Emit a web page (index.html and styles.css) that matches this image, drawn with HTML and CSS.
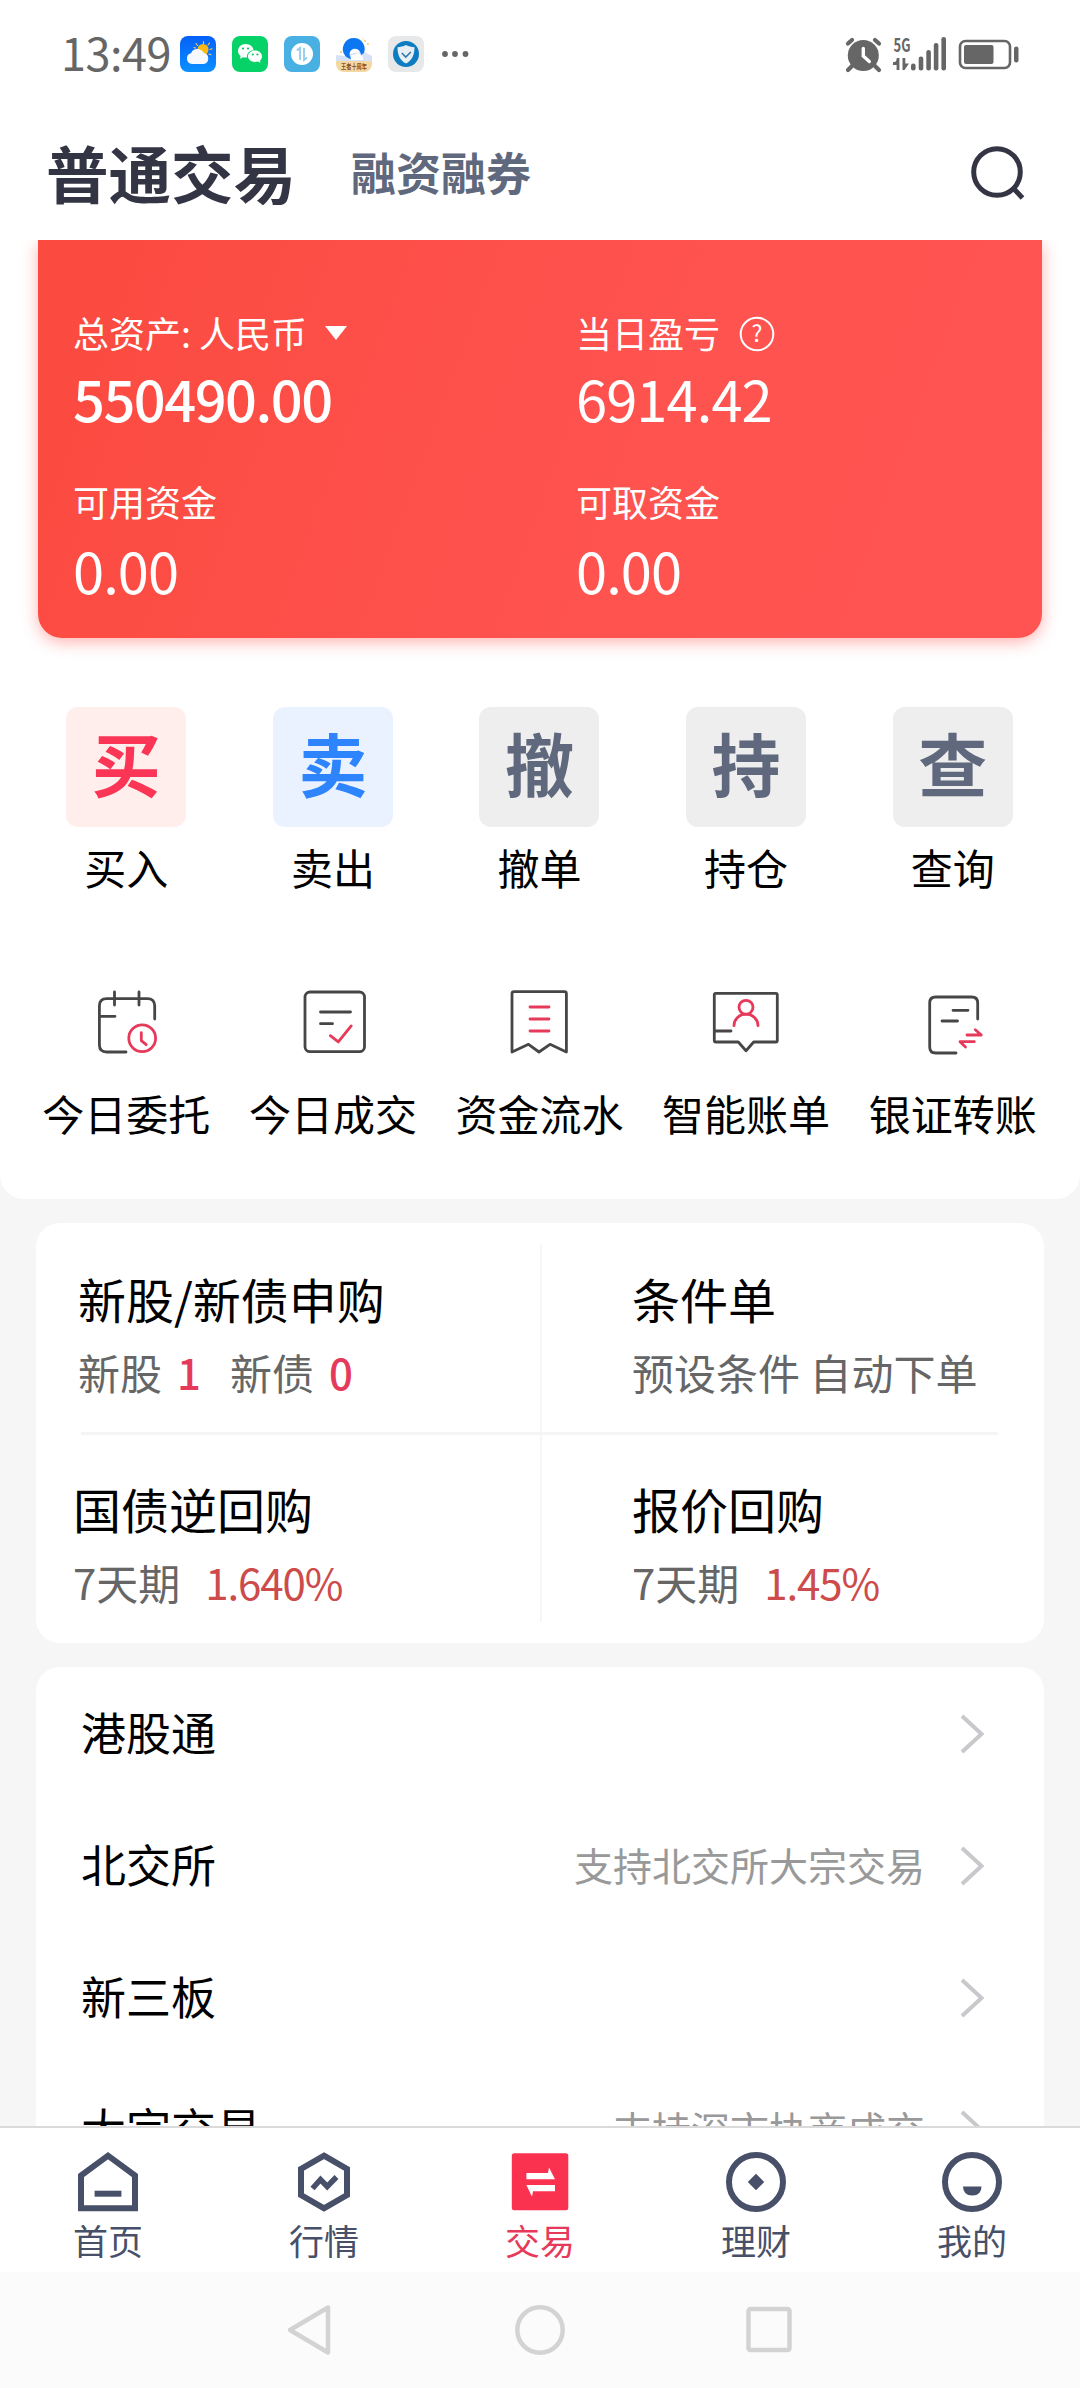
FILE: index.html
```html
<!DOCTYPE html>
<html lang="zh-CN">
<head>
<meta charset="utf-8">
<title>普通交易</title>
<link rel="stylesheet" href="styles.css">
</head>
<body>
<div class="status">
  <span class="time">13:49</span>
  <div class="apps">
    <svg width="36" height="36" viewBox="0 0 36 36">
      <defs><linearGradient id="sky" x1="0" y1="0" x2="0" y2="1"><stop offset="0" stop-color="#0560f8"/><stop offset="1" stop-color="#0a90ff"/></linearGradient></defs>
      <rect width="36" height="36" rx="8" fill="url(#sky)"/>
      <g stroke="#ffc65a" stroke-width="1.1" stroke-linecap="round"><path d="M23.5 8V5.5M17.5 9.500l-1.500-2M28 9l1.500-2M30 13.500l2-.8M15.500 12l-1.500-.5M29 18l2 .8"/></g>
      <circle cx="23" cy="13.500" r="5.500" fill="#fdb913"/>
      <path d="M12 28a5.500 5.500 0 0 1-1-10.800 7 7 0 0 1 12.500-.5A5.800 5.800 0 0 1 24 28z" fill="#f6faff"/>
    </svg>
    <svg width="36" height="36" viewBox="0 0 36 36">
      <rect width="36" height="36" rx="8" fill="#06d267"/>
      <path d="M13.500 8c4.500 0 7.800 2.800 8 6.300-4 .2-6.800 3-6.500 7.200-1.500.2-2.800 0-4-.3l-3 1.500.6-2.600C7 18.800 6 17 6 15c0-4 3.300-7 7.500-7z" fill="#fff"/>
      <path d="M23 14.500c4 0 7 2.600 7 5.800 0 1.700-.8 3.200-2 4.300l.5 2.200-2.700-1.300c-.9.300-1.800.4-2.800.4-4 0-7-2.500-7-5.600s3-5.800 7-5.800z" fill="#fff"/>
      <g fill="#06c160"><circle cx="11" cy="12.500" r="1.100"/><circle cx="16" cy="12.500" r="1.100"/><circle cx="20.800" cy="18.500" r="1"/><circle cx="25.400" cy="18.500" r="1"/></g>
    </svg>
    <svg width="36" height="36" viewBox="0 0 36 36">
      <rect width="36" height="36" rx="8" fill="#48b0e2"/><circle cx="18" cy="18" r="11" fill="#fff"/>
      <path d="M13 14.500l3-2.500v12M20 12v12l3-2.500" fill="none" stroke="#8fcdee" stroke-width="1.800"/>
    </svg>
    <svg width="36" height="36" viewBox="0 0 36 36">
      <path d="M0 19l8 1 10-3 10-1 8 4v8H0z" fill="#d5e2f8"/>
      <path d="M18 2a11 11 0 0 0-9 17.500c2 2.500 5 4 8 3.500-4-1-5-8 0-10 5-1.500 8 3 8 6l3-2A11 11 0 0 0 18 2z" fill="#0b78f2"/>
      <path d="M15 23c-1-4 2-5 4-4 1-3 6-2 6 1 3 0 3 4 1 4H15z" fill="#fff"/>
      <g fill="#f6c45b"><circle cx="29" cy="5" r=".9"/><circle cx="32" cy="8" r=".9"/><circle cx="5" cy="16" r=".9"/><circle cx="27" cy="3" r=".6"/></g>
      <path d="M0 25h36v3a8 8 0 0 1-8 8H8a8 8 0 0 1-8-8z" fill="#f3d9a1"/>
      <text class="badge-text" x="18" y="32.500" text-anchor="middle" textLength="26" lengthAdjust="spacingAndGlyphs">王者十周年</text>
    </svg>
    <svg width="36" height="36" viewBox="0 0 36 36">
      <rect width="36" height="36" rx="8" fill="#e6e8ea"/><circle cx="18" cy="18" r="13" fill="#0d7cc0"/>
      <path d="M18 9c2.800 1.500 5.500 2 8.500 2.200 0 7-2 13-8.500 16.300-6.500-3.300-8.500-9.300-8.500-16.300C12.500 11 15.200 10.500 18 9z" fill="#e9eef2"/>
      <path d="M13.800 17l4 4 5-5" fill="none" stroke="#2b7aad" stroke-width="1.600"/>
    </svg>
    <svg class="dots" width="28" height="36" viewBox="0 0 28 36"><g fill="#666"><circle cx="4" cy="18" r="2.900"/><circle cx="14" cy="18" r="2.900"/><circle cx="24.500" cy="18" r="2.900"/></g></svg>
  </div>
  <svg class="sysicons" width="180" height="60" viewBox="844 24 180 60">
    <g fill="#666">
      <circle cx="864.300" cy="55.500" r="15.500"/>
      <path d="M853 66l-4 4M876 66l4 4M849 43.500l4-3.500M880 43.500l-4-3.500" stroke="#666" stroke-width="4.200" stroke-linecap="round"/>
      <path d="M864.300 48.500v7.500l6 5.500" fill="none" stroke="#fff" stroke-width="3.400" stroke-linecap="round"/>
      <path d="M894 63.500h4.500M899 58v12" fill="none" stroke="#666" stroke-width="2.800"/><path d="M893.500 65l6-7v7zM903.500 58h2.800v5.500h3.700l-4.500 6.500h-2z"/>
      <rect x="912" y="63.500" width="4.600" height="7" rx="2.200"/><rect x="919.700" y="56.500" width="4.600" height="14" rx="2.200"/><rect x="927.300" y="50" width="4.600" height="20.500" rx="2.200"/><rect x="934.800" y="43" width="4.600" height="27.500" rx="2.200"/><rect x="942.400" y="37" width="4.600" height="33.500" rx="2.200"/>
      <rect x="965" y="45" width="29.500" height="19" rx="2"/><rect x="1015" y="46.500" width="4.500" height="16" rx="2.200"/>
    </g>
    <rect x="961" y="41" width="50" height="27" rx="5.500" fill="none" stroke="#666" stroke-width="2.600"/>
    <text class="net" x="894.500" y="51.500" textLength="17" lengthAdjust="spacingAndGlyphs">5G</text>
  </svg>
</div>

<header class="header">
  <h1>普通交易</h1>
  <span class="alt">融资融券</span>
  <svg class="search" width="60" height="60" viewBox="0 0 60 60"><circle cx="30" cy="30" r="23.300"/><path d="M47.500 47.500l8 8.500"/></svg>
</header>

<main class="content">
  <section class="top">
    <div class="assets">
      <div class="asset"><div class="label">总资产: 人民币<svg class="caret" width="22" height="14" viewBox="0 0 22 14"><path d="M0 0h22L11 14z" fill="#fff"/></svg></div><div class="num strong">550490.00</div></div>
      <div class="asset"><div class="label">当日盈亏<svg class="help" width="36" height="36" viewBox="0 0 36 36"><circle cx="18" cy="18" r="16.300" fill="none" stroke="#fff" stroke-width="2"/><text x="18" y="26" text-anchor="middle">?</text></svg></div><div class="num">6914.42</div></div>
      <div class="asset low"><div class="label">可用资金</div><div class="num">0.00</div></div>
      <div class="asset low"><div class="label">可取资金</div><div class="num">0.00</div></div>
    </div>

    <div class="actions">
      <div class="action"><span class="tile buy">买</span><span class="name">买入</span></div>
      <div class="action"><span class="tile sell">卖</span><span class="name">卖出</span></div>
      <div class="action"><span class="tile">撤</span><span class="name">撤单</span></div>
      <div class="action"><span class="tile">持</span><span class="name">持仓</span></div>
      <div class="action"><span class="tile">查</span><span class="name">查询</span></div>
    </div>

    <div class="actions tools">
      <div class="action">
        <svg class="line" width="80" height="80" viewBox="0 0 80 80"><path d="M68.700 37V24q0-7.300-7.300-7.300H20.700q-7.300 0-7.300 7.300v39q0 7 7.300 7H40M28.500 10v13M53 10v13M13.400 34.300H29"/><g class="red"><circle cx="56.200" cy="56.300" r="13.400"/><path d="M55.300 50.700v8l4.900 4"/></g></svg>
        <span class="name">今日委托</span></div>
      <div class="action">
        <svg class="line" width="80" height="80" viewBox="0 0 80 80"><rect x="12" y="10" width="59.500" height="59.700" rx="5"/><path d="M27.500 30h30M27.500 41.700h12"/><path class="red" d="M37.300 53.700l8 6.200 12.900-16"/></svg>
        <span class="name">今日成交</span></div>
      <div class="action">
        <svg class="line" width="80" height="80" viewBox="0 0 80 80"><path d="M13 70V11.700q0-2 2-2h50.400q2 0 2 2V70L51 62.300 40 70l-10.500-7.700z"/><path class="red" d="M31 25h19M31 37h19M31 49h19"/></svg>
        <span class="name">资金流水</span></div>
      <div class="action">
        <svg class="line" width="80" height="80" viewBox="0 0 80 80"><path d="M32.300 60H9.800q-1.500 0-1.500-1.500V12.800q0-1.500 1.500-1.500h60q1.500 0 1.500 1.500v45.700q0 1.500-1.500 1.500H47.700L40 68.700zM8.300 49h16.700"/><g class="red"><circle cx="40" cy="25.300" r="7"/><path d="M28 43.700a12 11.500 0 0 1 24 0"/></g></svg>
        <span class="name">智能账单</span></div>
      <div class="action">
        <svg class="line" width="80" height="80" viewBox="0 0 80 80"><path d="M64.700 37V21q0-6-6-6h-36q-6 0-6 6v44q0 6 6 6H43M40 28.300h15M29 39h15.500"/><path class="red" d="M54 53h14.300l-6-5.300M61.300 59.700H47l5.500 5.300"/></svg>
        <span class="name">银证转账</span></div>
    </div>
  </section>

  <section class="card products">
    <div class="row">
      <div class="cell"><div class="title">新股/新债申购</div><div class="sub">新股<b class="n1">1</b>新债<b class="n2">0</b></div></div>
      <div class="cell right"><div class="title">条件单</div><div class="sub">预设条件 自动下单</div></div>
    </div>
    <div class="rule"></div>
    <div class="row second">
      <div class="cell"><div class="title">国债逆回购</div><div class="sub">7天期<span class="rate">1.640%</span></div></div>
      <div class="cell right"><div class="title">报价回购</div><div class="sub">7天期<span class="rate">1.45%</span></div></div>
    </div>
  </section>

  <section class="card list">
    <div class="item"><span>港股通</span><svg width="26" height="42" viewBox="0 0 26 42"><path d="M3 3l19.500 18L3 39"/></svg></div>
    <div class="item"><span>北交所</span><span class="note">支持北交所大宗交易</span><svg width="26" height="42" viewBox="0 0 26 42"><path d="M3 3l19.500 18L3 39"/></svg></div>
    <div class="item"><span>新三板</span><svg width="26" height="42" viewBox="0 0 26 42"><path d="M3 3l19.500 18L3 39"/></svg></div>
    <div class="item"><span>大宗交易</span><span class="note">支持深市协商成交</span><svg width="26" height="42" viewBox="0 0 26 42"><path d="M3 3l19.500 18L3 39"/></svg></div>
  </section>
</main>

<nav class="tabs">
  <div class="tab"><svg width="64" height="64" viewBox="0 0 64 64"><path d="M5 58.300V25.500L32 5.700l27 19.800v32.800z"/><path d="M18.600 43.700h26.800"/></svg>首页</div>
  <div class="tab"><svg width="64" height="64" viewBox="0 0 64 64"><path d="M32 5.600L55 19v26L32 58.400 9 45V19z"/><path d="M20.500 38.500l8-9 6.700 7L44.500 27" stroke-width="5.500"/></svg>行情</div>
  <div class="tab active"><svg width="64" height="64" viewBox="0 0 64 64"><rect x="3.800" y="3.300" width="56.500" height="57" rx="2.500" fill="#fa3250" stroke="none"/><path d="M18.400 23H40l1-5.500L47 29.200H18.400zM47 35H18.400L24 46.700l1-5.400h22z" fill="#fff" stroke="none"/></svg>交易</div>
  <div class="tab"><svg width="64" height="64" viewBox="0 0 64 64"><circle cx="32" cy="32" r="27"/><path d="M32 23.700l8.200 8.300-8.200 8.300-8.200-8.300z" fill="#475068" stroke="none"/></svg>理财</div>
  <div class="tab"><svg width="64" height="64" viewBox="0 0 64 64"><circle cx="32" cy="32" r="27"/><path d="M23 36.500h18.500q0 9-9.200 9T23 36.500z" fill="#475068" stroke="none"/></svg>我的</div>
</nav>

<div class="sysnav">
  <svg width="54" height="54" viewBox="0 0 54 54"><path d="M45 4.500v45L7 27z"/></svg>
  <svg width="54" height="54" viewBox="0 0 54 54"><circle cx="27" cy="27" r="22.700"/></svg>
  <svg width="54" height="54" viewBox="0 0 54 54"><rect x="5.500" y="6" width="41" height="41" rx="2"/></svg>
</div>
</body>
</html>
```
FILE: styles.css
```css
* { box-sizing: border-box; }
body {
  margin: 0;
  width: 1080px;
  height: 2388px;
  overflow: hidden;
  display: flex;
  flex-direction: column;
  background: #f6f6f6;
  color: #000;
  font-family: "Noto Sans CJK SC", "Noto Sans", sans-serif;
}
svg { display: block; flex: none; }

.status {
  height: 108px;
  flex: none;
  background: #fff;
  display: flex;
  padding-left: 61px;
}
.time {
  width: 119px;
  padding-top: 18px;
  font-size: 45px;
  line-height: 68px;
  letter-spacing: -0.5px;
  color: #666;
}
.apps { display: flex; gap: 16px; padding-top: 36px; }
.dots { margin-left: 1px; }
.badge-text { font-size: 6.5px; font-weight: 700; fill: #8a4b1c; }
.sysicons { margin: 24px 57px 0 auto; }
.net { font-size: 19px; font-weight: 700; fill: #666; }

.header {
  height: 132px;
  flex: none;
  background: #fff;
  display: flex;
  align-items: center;
  padding: 0 53px 4px 46px;
}
.header h1 {
  margin: 0;
  width: 305px;
  font-size: 62.500px;
  line-height: 80px;
  font-weight: 700;
  color: #343544;
}
.alt { font-size: 45px; line-height: 60px; font-weight: 700; color: #5f687d; }
.search { margin-left: auto; fill: none; stroke: #343544; stroke-width: 5; }

.content { flex: 1; min-height: 0; overflow: hidden; }
.top { height: 959px; background: #fff; border-radius: 0 0 24px 24px; }
.assets {
  height: 398px;
  margin: 0 38px;
  padding: 67px 0 0 35px;
  display: grid;
  grid-template-columns: 503px 1fr;
  grid-template-rows: 169px 1fr;
  border-radius: 0 0 24px 24px;
  background: linear-gradient(110deg, #fb4a3f, #ff5350 60%, #ff5452);
  box-shadow: 0 4px 16px rgba(255, 84, 80, 0.45);
  color: #fff;
}
.label { display: flex; align-items: center; font-size: 36px; line-height: 50px; }
.caret { margin: 1px 0 0 18px; }
.help { margin: 3px 0 0 19px; }
.help text { font-size: 23px; fill: #fff; }
.num { margin-top: 7px; font-size: 56px; line-height: 68px; letter-spacing: -0.9px; }
.strong { font-weight: 500; letter-spacing: -1.5px; }
.low .num { margin-top: 10px; }

.actions {
  display: grid;
  grid-template-columns: repeat(5, 1fr);
  padding: 69px 24px 0 23px;
}
.action { display: flex; flex-direction: column; align-items: center; }
.tile {
  width: 120px;
  height: 120px;
  border-radius: 12px;
  background: #eee;
  color: #5f687d;
  font-size: 69px;
  font-weight: 700;
  line-height: 111px;
  text-align: center;
}
.buy { background: #ffeeec; color: #fa3556; }
.sell { background: #eaf2ff; color: #2d84fc; }
.name { margin-top: 14px; font-size: 42px; line-height: 52px; white-space: nowrap; }
.tools { padding-top: 89px; }
.tools .name { margin-top: 25px; }
.line { fill: none; stroke: #464646; stroke-width: 2.800; stroke-linecap: round; stroke-linejoin: round; }
.red { stroke: #e63a5a; }

.card { margin: 24px 36px 0; background: #fff; border-radius: 24px; }
.products { height: 420px; padding: 21px 0; }
.row { display: grid; grid-template-columns: 504px 1fr; height: 188px; }
.cell { padding: 24px 0 0 42px; }
.right { padding-left: 90px; border-left: 2px solid #f6f6f6; }
.second { height: 187px; }
.second .cell { padding-top: 43px; padding-left: 37px; }
.second .right { padding-left: 90px; }
.rule { height: 3px; margin: 0 46px 0 45px; background: #f5f5f5; }
.title { font-size: 48px; line-height: 60px; }
.sub { margin-top: 18px; font-size: 42px; line-height: 52px; color: #666; }
.sub b { color: #e63a5c; font-weight: 500; }
.n1 { margin: 0 29px 0 15px; }
.n2 { margin-left: 15px; }
.rate { margin-left: 25px; color: #cd4b4b; letter-spacing: -1.1px; }

.list { padding-top: 1px; border-radius: 24px 24px 0 0; }
.item {
  height: 132px;
  display: flex;
  align-items: center;
  padding: 0 59px 0 45px;
  font-size: 45px;
  line-height: 60px;
}
.item > span { padding-bottom: 5px; }
.note { margin-left: auto; font-size: 39px; color: #999; }
.item svg { margin-left: auto; fill: none; stroke: #c8c8cd; stroke-width: 4; }
.note + svg { margin-left: 34px; }

.tabs {
  height: 146px;
  flex: none;
  background: #fff;
  border-top: 2px solid #dadada;
  display: grid;
  grid-template-columns: repeat(5, 1fr);
}
.tab {
  display: flex;
  flex-direction: column;
  align-items: center;
  padding-top: 22px;
  font-size: 35px;
  line-height: 51px;
  color: #475068;
}
.tab svg { fill: none; stroke: #475068; stroke-width: 6; }
.active { color: #e63a5a; }

.sysnav {
  height: 116px;
  flex: none;
  background: #fbfbfb;
  display: flex;
  justify-content: center;
  align-items: center;
  gap: 176px;
}
.sysnav svg { fill: none; stroke: #d3d3d3; stroke-width: 4.500; stroke-linejoin: round; }
```
